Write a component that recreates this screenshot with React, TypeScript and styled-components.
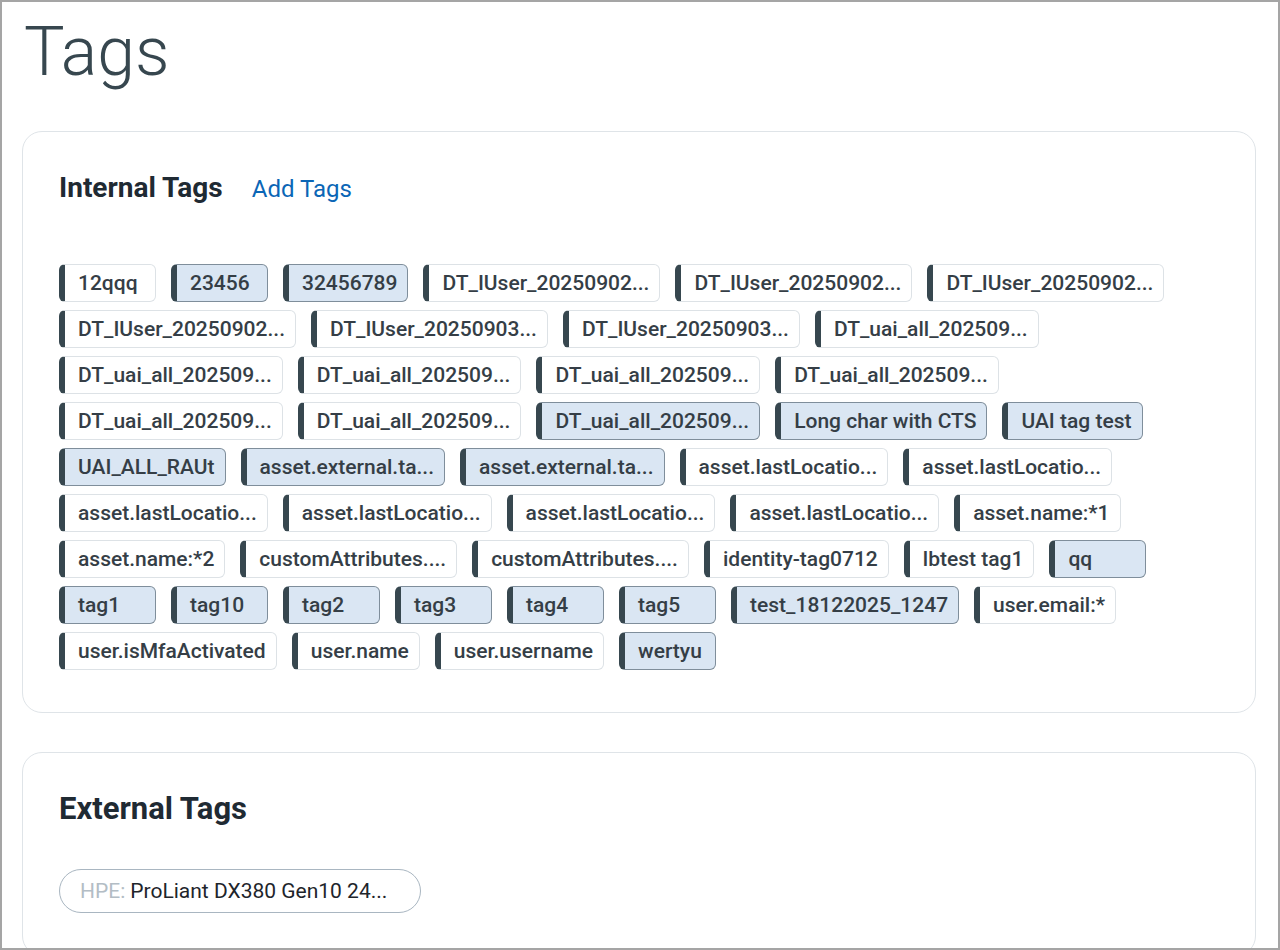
import styled, { createGlobalStyle } from 'styled-components';

const GlobalStyle = createGlobalStyle`
  html, body {
    margin: 0;
    padding: 0;
    background: #ffffff;
  }
  * {
    box-sizing: border-box;
  }
`;

const Frame = styled.div`
  height: 950px;
  border: 2px solid #a5a5a5;
  overflow: hidden;
  padding: 0 22px 0 20px;
  font-family: Roboto, 'Liberation Sans', sans-serif;
`;

const PageTitle = styled.h1`
  margin: 16px 0 0 2px;
  font-size: 68px;
  line-height: 68px;
  font-weight: 300;
  color: #37474f;
`;

const Card = styled.section<{ $top: number }>`
  margin-top: ${(props) => props.$top}px;
  border: 1px solid #dfe4e8;
  border-radius: 20px;
  padding: 36px 36px 42px;
  background: #ffffff;
`;

const CardHeader = styled.div`
  display: flex;
  align-items: baseline;
  gap: 29px;
`;

const CardTitle = styled.h2<{ $size: number }>`
  margin: 0;
  font-size: ${(props) => props.$size}px;
  line-height: 40px;
  font-weight: 700;
  color: #1f2a33;
`;

const AddLink = styled.a`
  font-size: 24px;
  color: #0b66b6;
  text-decoration: none;
  cursor: pointer;
`;

const TagList = styled.div`
  display: flex;
  flex-wrap: wrap;
  column-gap: 15px;
  row-gap: 8px;
  margin-top: 56px;
`;

const Tag = styled.span<{ $selected?: boolean }>`
  display: inline-flex;
  align-items: center;
  height: 38px;
  min-width: 97px;
  padding: 0 10px 0 13px;
  border: 1px solid ${(props) => (props.$selected ? '#7f8e9b' : '#dde2e6')};
  border-left: 6px solid #37474f;
  border-radius: 6px;
  background: ${(props) => (props.$selected ? '#dae6f3' : '#ffffff')};
  font-size: 21px;
  font-weight: 500;
  color: #353e46;
  white-space: nowrap;
`;

const ExternalList = styled.div`
  display: flex;
  flex-wrap: wrap;
  gap: 12px;
  margin-top: 40px;
`;

const Pill = styled.span`
  display: inline-flex;
  align-items: center;
  height: 44px;
  width: 362px;
  padding: 0 20px;
  border: 1px solid #a9b6c1;
  border-radius: 22px;
  font-size: 21px;
  color: #1e252b;
  white-space: nowrap;
`;

const PillKey = styled.span`
  color: #b3bdc5;
  margin-right: 5px;
`;

const internalTags: { label: string; selected?: boolean }[] = [
  { label: '12qqq' },
  { label: '23456', selected: true },
  { label: '32456789', selected: true },
  { label: 'DT_IUser_20250902...' },
  { label: 'DT_IUser_20250902...' },
  { label: 'DT_IUser_20250902...' },
  { label: 'DT_IUser_20250902...' },
  { label: 'DT_IUser_20250903...' },
  { label: 'DT_IUser_20250903...' },
  { label: 'DT_uai_all_202509...' },
  { label: 'DT_uai_all_202509...' },
  { label: 'DT_uai_all_202509...' },
  { label: 'DT_uai_all_202509...' },
  { label: 'DT_uai_all_202509...' },
  { label: 'DT_uai_all_202509...' },
  { label: 'DT_uai_all_202509...' },
  { label: 'DT_uai_all_202509...', selected: true },
  { label: 'Long char with CTS', selected: true },
  { label: 'UAI tag test', selected: true },
  { label: 'UAI_ALL_RAUt', selected: true },
  { label: 'asset.external.ta...', selected: true },
  { label: 'asset.external.ta...', selected: true },
  { label: 'asset.lastLocatio...' },
  { label: 'asset.lastLocatio...' },
  { label: 'asset.lastLocatio...' },
  { label: 'asset.lastLocatio...' },
  { label: 'asset.lastLocatio...' },
  { label: 'asset.lastLocatio...' },
  { label: 'asset.name:*1' },
  { label: 'asset.name:*2' },
  { label: 'customAttributes....' },
  { label: 'customAttributes....' },
  { label: 'identity-tag0712' },
  { label: 'lbtest tag1' },
  { label: 'qq', selected: true },
  { label: 'tag1', selected: true },
  { label: 'tag10', selected: true },
  { label: 'tag2', selected: true },
  { label: 'tag3', selected: true },
  { label: 'tag4', selected: true },
  { label: 'tag5', selected: true },
  { label: 'test_18122025_1247', selected: true },
  { label: 'user.email:*' },
  { label: 'user.isMfaActivated' },
  { label: 'user.name' },
  { label: 'user.username' },
  { label: 'wertyu', selected: true },
];

function App() {
  return (
    <>
      <GlobalStyle />
      <Frame>
        <PageTitle>Tags</PageTitle>
        <Card $top={45}>
          <CardHeader>
            <CardTitle $size={28}>Internal Tags</CardTitle>
            <AddLink>Add Tags</AddLink>
          </CardHeader>
          <TagList>
            {internalTags.map((tag, i) => (
              <Tag key={i} $selected={tag.selected}>
                {tag.label}
              </Tag>
            ))}
          </TagList>
        </Card>
        <Card $top={39}>
          <CardHeader>
            <CardTitle $size={31}>External Tags</CardTitle>
          </CardHeader>
          <ExternalList>
            <Pill>
              <PillKey>HPE:</PillKey>
              ProLiant DX380 Gen10 24...
            </Pill>
          </ExternalList>
        </Card>
      </Frame>
    </>
  );
}

export default App;
